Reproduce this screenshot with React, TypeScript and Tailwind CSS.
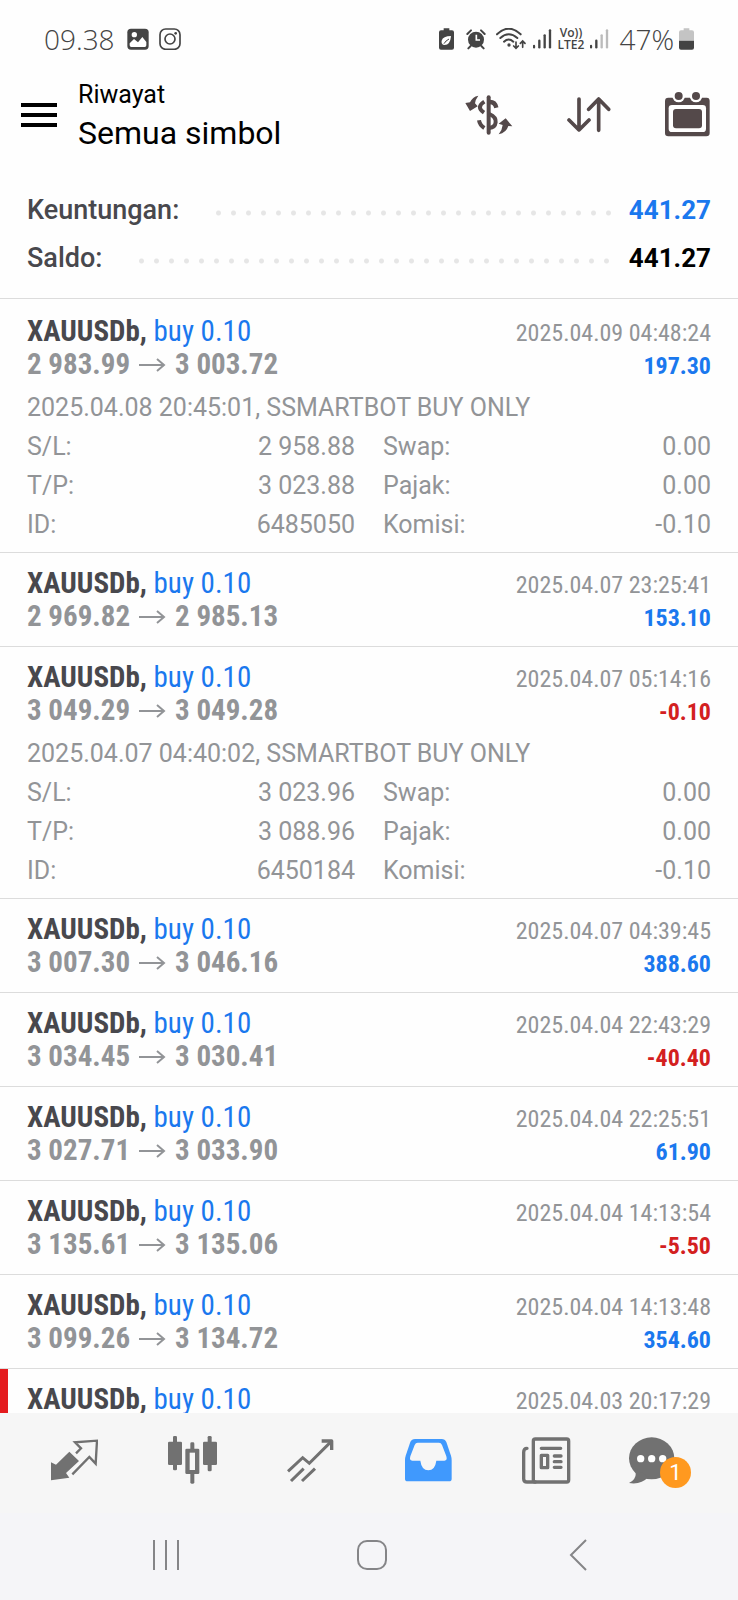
import { ReactNode } from "react";

type Details = {
    opened: string
    sl: string
    tp: string
    id: string
    swap: string
    tax: string
    commission: string
}

type Deal = {
    from: string
    to: string
    closed: string
    profit: string
    marked?: boolean
    details?: Details
}

const deals: Deal[] = [
    {
        from: "2 983.99", to: "3 003.72", closed: "2025.04.09 04:48:24", profit: "197.30",
        details: { opened: "2025.04.08 20:45:01", sl: "2 958.88", tp: "3 023.88", id: "6485050", swap: "0.00", tax: "0.00", commission: "-0.10" },
    },
    { from: "2 969.82", to: "2 985.13", closed: "2025.04.07 23:25:41", profit: "153.10" },
    {
        from: "3 049.29", to: "3 049.28", closed: "2025.04.07 05:14:16", profit: "-0.10",
        details: { opened: "2025.04.07 04:40:02", sl: "3 023.96", tp: "3 088.96", id: "6450184", swap: "0.00", tax: "0.00", commission: "-0.10" },
    },
    { from: "3 007.30", to: "3 046.16", closed: "2025.04.07 04:39:45", profit: "388.60" },
    { from: "3 034.45", to: "3 030.41", closed: "2025.04.04 22:43:29", profit: "-40.40" },
    { from: "3 027.71", to: "3 033.90", closed: "2025.04.04 22:25:51", profit: "61.90" },
    { from: "3 135.61", to: "3 135.06", closed: "2025.04.04 14:13:54", profit: "-5.50" },
    { from: "3 099.26", to: "3 134.72", closed: "2025.04.04 14:13:48", profit: "354.60" },
    { from: "", to: "", closed: "2025.04.03 20:17:29", profit: "", marked: true },
]

function SignalIcon({ level }: { level: number }) {
    const bars = [
        { x: 3, y: 54 },
        { x: 19, y: 38 },
        { x: 35, y: 22 },
        { x: 51, y: 7 },
    ]

    return (
        <svg viewBox="0 0 57 66" className="h-[22px] w-[19px]" strokeWidth="7" strokeLinecap="round">
            {bars.map((bar, i) => (
                <path key={bar.x} d={`M${bar.x} ${bar.y}V58`} stroke={i < level ? "#444" : "#bbb"} />
            ))}
        </svg>
    )
}

function StatusBar() {
    return (
        <div className="flex h-[78px] shrink-0 items-center justify-between px-11 font-['Open_Sans',sans-serif] text-[28px] font-[350] text-[#444]">
            <div className="flex items-center">
                <span className="mr-3">09.38</span>
                <svg viewBox="0 0 66 66" className="mr-2.5 h-[22px] w-[22px]">
                    <rect x="1" y="2" width="64" height="63" rx="11" fill="#444" />
                    <circle cx="22" cy="20" r="8" fill="#fff" />
                    <path d="M8 46L21 33L33 43L46 27L58 42V52Q58 57 53 57H13Q8 57 8 52Z" fill="#fff" />
                </svg>
                <svg viewBox="0 0 66 66" className="h-[22px] w-[22px]" fill="none" stroke="#444" strokeWidth="5">
                    <rect x="3" y="3" width="60" height="61" rx="17" />
                    <circle cx="33" cy="33" r="15" />
                    <circle cx="50" cy="16" r="4" fill="#444" stroke="none" />
                </svg>
            </div>
            <div className="flex items-center">
                <svg viewBox="0 0 45 66" className="mr-3 h-[22px] w-[15px]">
                    <path d="M14 1H31V7H39Q45 7 45 13V59Q45 65 39 65H6Q0 65 0 59V13Q0 7 6 7H14Z" fill="#444" />
                    <path d="M36 24Q12 24 8 38Q6 48 15 51Q34 52 36 24Z" fill="#fff" />
                    <path d="M15 47Q20 38 30 33" stroke="#444" strokeWidth="3" fill="none" />
                </svg>
                <svg viewBox="0 0 60 66" className="mr-2.5 h-[22px] w-[20px]">
                    <circle cx="30" cy="35" r="24" fill="#444" />
                    <path d="M4 18L15 7M56 18L45 7M14 54L7 61M46 54L53 61" stroke="#444" strokeWidth="6" strokeLinecap="round" />
                    <path d="M31 20V36H42" stroke="#fff" strokeWidth="5" fill="none" />
                </svg>
                <svg viewBox="0 0 90 66" className="mr-[7px] h-[22px] w-[30px]" fill="none" stroke="#444" strokeWidth="6" strokeLinecap="round">
                    <path d="M3 19Q38 -15 74 19M13 30Q38 8 64 30M24 41Q38 28 52 41" />
                    <circle cx="39" cy="51" r="5" fill="#444" stroke="none" />
                    <path d="M60 42V60M53 54L60 61L67 54M80 58V40M73 46L80 39L87 46" strokeWidth="5" />
                </svg>
                <SignalIcon level={4} />
                <span className="mx-1.5 text-center text-[12px] leading-[12px] font-semibold">Vo))<br />LTE2</span>
                <SignalIcon level={2} />
                <span className="mr-[5px] ml-2.5">47%</span>
                <svg viewBox="0 0 45 66" className="h-[22px] w-[15px]">
                    <path d="M14 1H31V7H39Q45 7 45 13V38H0V13Q0 7 6 7H14Z" fill="#c4c4c4" />
                    <path d="M0 38H45V59Q45 65 39 65H6Q0 65 0 59Z" fill="#444" />
                </svg>
            </div>
        </div>
    )
}

function Header() {
    return (
        <header className="flex shrink-0 items-center pr-7 pl-[21px] text-black">
            <button type="button" aria-label="Menu" className="mr-[21px] pb-0.5">
                <svg viewBox="0 0 36 24" className="h-6 w-9">
                    <path d="M0 2H36M0 12H36M0 22H36" stroke="#000" strokeWidth="4" />
                </svg>
            </button>
            <div className="flex-1">
                <p className="text-[25px] leading-[34px]">Riwayat</p>
                <h1 className="text-[32px] leading-[42px]">Semua simbol</h1>
            </div>
            <div className="flex items-center gap-[54px] pb-0.5">
                <button type="button" aria-label="Mata uang">
                    <svg viewBox="0 0 144 120" className="h-10 w-12" fill="none" stroke="#54494a" strokeWidth="12">
                        <path d="M71 7V113" strokeLinecap="round" />
                        <path d="M58 20Q32 36 57 53" />
                        <path d="M73 21Q90 20 94 38" strokeWidth="13" />
                        <path d="M73 57Q94 66 92 82Q90 98 73 99" />
                        <path d="M42 76Q44 90 58 99" />
                        <path d="M1 24L15 22Q22 5 40 2Q31 14 30 25L38 34L15 48Z" fill="#54494a" stroke="none" />
                        <path d="M122 70L142 94L130 93Q124 113 101 118Q112 104 113 90L101 86Z" fill="#54494a" stroke="none" />
                    </svg>
                </button>
                <button type="button" aria-label="Urutkan">
                    <svg viewBox="0 0 132 108" className="h-9 w-11" fill="none" stroke="#54494a" strokeWidth="11" strokeLinecap="round" strokeLinejoin="round">
                        <path d="M36 6V98M6 69L36 99L66 69" />
                        <path d="M95 100V8M65 37L95 6L125 37" />
                    </svg>
                </button>
                <button type="button" aria-label="Kalender">
                    <svg viewBox="0 0 135 144" className="h-12 w-[45px]" fill="#54494a">
                        <path d="M10 20H125Q134 20 134 30V126Q134 136 124 136H10Q0 136 0 126V30Q0 20 10 20Z" />
                        <path d="M21 42H113Q123 42 123 52V113Q123 123 113 123H21Q11 123 11 113V52Q11 42 21 42Z" fill="#fff" />
                        <rect x="24" y="54" width="87" height="58" rx="9" />
                        <circle cx="41" cy="15" r="19" fill="#fff" />
                        <circle cx="93" cy="15" r="19" fill="#fff" />
                        <circle cx="41" cy="15" r="12" />
                        <circle cx="93" cy="15" r="12" />
                    </svg>
                </button>
            </div>
        </header>
    )
}

function SummaryRow({ label, value, blue }: { label: string, value: string, blue?: boolean }) {
    return (
        <div className="flex h-12 items-center">
            <dt className="text-[27px] font-medium text-[#48484d]">{label}</dt>
            <span className="mt-1.5 mr-3.5 ml-8 h-1.5 flex-1 bg-[radial-gradient(circle,#e6e6e6_2px,transparent_3px)] bg-size-[15px_6px]" />
            <dd className={`text-[26px] font-bold ${blue ? "text-[#1a78ee]" : "text-black"}`}>{value}</dd>
        </div>
    )
}

function DetailRow({ left, leftValue, right, rightValue }: { left: string, leftValue: string, right: string, rightValue: string }) {
    return (
        <div className="grid grid-cols-2 gap-x-7">
            <div className="flex justify-between">
                <dt>{left}</dt>
                <dd>{leftValue}</dd>
            </div>
            <div className="flex justify-between">
                <dt>{right}</dt>
                <dd>{rightValue}</dd>
            </div>
        </div>
    )
}

function DealItem({ deal }: { deal: Deal }) {
    const loss = deal.profit.startsWith("-")

    return (
        <li className={`border-b border-[#dcdcdc] px-[27px] pt-3.5 ${deal.details ? "pb-2" : "pb-[13px]"} ${deal.marked ? "relative" : ""}`}>
            {deal.marked && <span className="absolute inset-y-0 left-0 w-2 bg-[#e41b1e]" />}
            <div className="font-['Roboto_Condensed',Roboto,sans-serif] text-[29px] leading-[33px]">
                <div className="flex h-[33px] items-baseline justify-between">
                    <p className="text-[#1a78ee]"><b className="text-[#48484d]">XAUUSDb,</b> buy 0.10</p>
                    <time className="text-[24px] text-[#929497]">{deal.closed}</time>
                </div>
                {deal.profit && (
                    <div className="flex h-[33px] items-baseline justify-between font-bold">
                        <p className="flex items-center text-[#929497]">
                            {deal.from}
                            <svg viewBox="0 0 27 14" className="mx-[9px] h-3.5 w-[27px]" fill="none" stroke="#929497" strokeWidth="2">
                                <path d="M0 7H25M18 1L25 7L18 13" />
                            </svg>
                            {deal.to}
                        </p>
                        <p className={`text-[24px] ${loss ? "text-[#d3201f]" : "text-[#1a78ee]"}`}>{deal.profit}</p>
                    </div>
                )}
            </div>
            {deal.details && (
                <div className="mt-[7px] text-[25px] leading-[39px] text-[#929497]">
                    <p>{deal.details.opened}, SSMARTBOT BUY ONLY</p>
                    <dl>
                        <DetailRow left="S/L:" leftValue={deal.details.sl} right="Swap:" rightValue={deal.details.swap} />
                        <DetailRow left="T/P:" leftValue={deal.details.tp} right="Pajak:" rightValue={deal.details.tax} />
                        <DetailRow left="ID:" leftValue={deal.details.id} right="Komisi:" rightValue={deal.details.commission} />
                    </dl>
                </div>
            )}
        </li>
    )
}

function NavButton({ label, children }: { label: string, children: ReactNode }) {
    return (
        <button type="button" aria-label={label} className="flex flex-1 items-center justify-center">
            {children}
        </button>
    )
}

function BottomNav() {
    return (
        <nav className="flex h-[100px] shrink-0 bg-[#f6f6f6] px-[15px] pb-1.5">
            <NavButton label="Kuotasi">
                <svg viewBox="0 0 144 129" className="h-[43px] w-12">
                    <path d="M58 38L87 66L48 102L58 116L3 124V70L18 77Z" fill="#717171" />
                    <path d="M67 106L118 54L137 74L141 5L75 10L93 28L78 43" fill="none" stroke="#717171" strokeWidth="7" />
                </svg>
            </NavButton>
            <NavButton label="Chart">
                <svg viewBox="0 0 147 144" className="h-12 w-[49px]" fill="#717171">
                    <rect x="15" y="0" width="12" height="103" rx="4" />
                    <rect x="0" y="17" width="42" height="70" rx="4" />
                    <rect x="67" y="19" width="12" height="124" rx="4" />
                    <rect x="52" y="38" width="42" height="76" rx="4" />
                    <rect x="65" y="50" width="16" height="52" fill="#f6f6f6" />
                    <rect x="119" y="0" width="12" height="106" rx="4" />
                    <rect x="105" y="17" width="42" height="70" rx="4" />
                </svg>
            </NavButton>
            <NavButton label="Trading">
                <svg viewBox="0 0 141 135" className="h-[45px] w-[47px]" fill="none" stroke="#717171" strokeWidth="9">
                    <path d="M3 100L47 59L67 76L130 13" />
                    <path d="M104 9H134V36" strokeWidth="10" strokeLinejoin="round" />
                    <path d="M12 129L50 92M45 129L84 92" />
                </svg>
            </NavButton>
            <NavButton label="Riwayat">
                <svg viewBox="0 0 141 129" className="h-[43px] w-[47px]">
                    <path d="M30 0H110Q120 0 124 9L138 50Q140 56 140 64V119Q140 127 132 127H8Q0 127 0 119V64Q0 56 2 50L16 9Q20 0 30 0Z" fill="#4099fd" />
                    <path d="M38 11H102Q108 11 111 18L124 52Q128 65 118 65H94Q90 94 70 94Q50 94 46 65H22Q12 65 16 52L29 18Q32 11 38 11Z" fill="#f6f6f6" />
                </svg>
            </NavButton>
            <NavButton label="Berita">
                <svg viewBox="0 0 147 141" className="h-[47px] w-[49px]" fill="none" stroke="#717171" strokeWidth="10" strokeLinecap="round" strokeLinejoin="round">
                    <rect x="34" y="6" width="106" height="129" rx="6" />
                    <path d="M15 34Q5 34 5 46V125Q5 135 15 135H40" />
                    <path d="M58 34H116M97 57H117M97 74H117M97 91H117" />
                    <rect x="58" y="55" width="19" height="37" />
                </svg>
            </NavButton>
            <NavButton label="Pesan">
                <span className="relative mr-6">
                    <svg viewBox="0 0 138 141" className="h-[47px] w-[46px]" fill="#717171">
                        <ellipse cx="68" cy="64" rx="68" ry="63" />
                        <path d="M20 95Q25 128 0 138Q36 144 58 120Z" />
                        <g fill="#fff">
                            <circle cx="35" cy="65" r="11" />
                            <circle cx="68" cy="65" r="11" />
                            <circle cx="101" cy="65" r="11" />
                        </g>
                    </svg>
                    <span className="absolute -right-4 -bottom-1 flex size-[31px] items-center justify-center rounded-full bg-[#ff991f] text-[22px] text-white">1</span>
                </span>
            </NavButton>
        </nav>
    )
}

function SystemBar() {
    return (
        <div className="flex h-[87px] shrink-0 bg-[#f5f5f8] pr-[57px] pb-[3px] pl-[63px]">
            <NavButton label="Terbaru">
                <svg viewBox="0 0 30 30" className="size-[30px]" stroke="#858588" strokeWidth="2">
                    <path d="M3 0V30M15 0V30M27 0V30" />
                </svg>
            </NavButton>
            <NavButton label="Beranda">
                <svg viewBox="0 0 32 32" className="size-8" fill="none" stroke="#858588" strokeWidth="2">
                    <rect x="2" y="2" width="28" height="28" rx="9" />
                </svg>
            </NavButton>
            <NavButton label="Kembali">
                <svg viewBox="0 0 18 32" className="h-8 w-[18px]" fill="none" stroke="#858588" strokeWidth="2">
                    <path d="M17 1L2 16L17 31" />
                </svg>
            </NavButton>
        </div>
    )
}

export default function App() {
    return (
        <div className="flex h-screen flex-col bg-[#fefefe] font-[Roboto,sans-serif]">
            <StatusBar />
            <Header />
            <main className="flex min-h-0 flex-1 flex-col pt-8">
                <dl className="shrink-0 border-b border-[#dcdcdc] px-[27px] pb-4">
                    <SummaryRow label="Keuntungan:" value="441.27" blue />
                    <SummaryRow label="Saldo:" value="441.27" />
                </dl>
                <ul className="flex-1 overflow-y-auto pt-0.5 [scrollbar-width:none]">
                    {deals.map((deal) => (
                        <DealItem key={deal.closed} deal={deal} />
                    ))}
                </ul>
            </main>
            <BottomNav />
            <SystemBar />
        </div>
    )
}
